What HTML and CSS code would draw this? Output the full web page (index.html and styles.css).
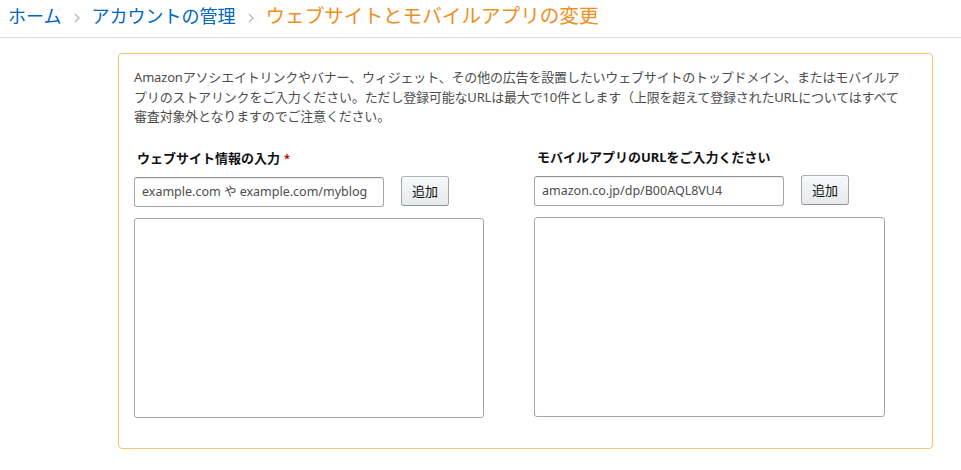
FILE: index.html
```html
<!DOCTYPE html>
<html lang="ja">
<head>
<meta charset="utf-8">
<title>ウェブサイトとモバイルアプリの変更</title>
<link rel="stylesheet" href="styles.css">
</head>
<body>
<nav class="crumbs">
  <a class="crumb" href="#">ホーム</a>
  <svg class="chev" width="6" height="10" viewBox="0 0 6 10"><path d="M1 1l4 4-4 4" fill="none" stroke="#b8b8b8" stroke-width="1.4"/></svg>
  <a class="crumb" href="#">アカウントの管理</a>
  <svg class="chev" width="6" height="10" viewBox="0 0 6 10"><path d="M1 1l4 4-4 4" fill="none" stroke="#b8b8b8" stroke-width="1.4"/></svg>
  <span class="crumb-current">ウェブサイトとモバイルアプリの変更</span>
</nav>
<main class="page">
  <section class="panel">
    <p class="intro">Amazonアソシエイトリンクやバナー、ウィジェット、その他の広告を設置したいウェブサイトのトップドメイン、またはモバイルア<br>プリのストアリンクをご入力ください。ただし登録可能なURLは最大で10件とします（上限を超えて登録されたURLについてはすべて<br>審査対象外となりますのでご注意ください。</p>
    <div class="cols">
      <div class="col">
        <label class="label">ウェブサイト情報の入力<span class="req">*</span></label>
        <div class="row">
          <input class="field" type="text" placeholder="example.com や example.com/myblog">
          <button class="btn" type="button">追加</button>
        </div>
        <textarea class="area"></textarea>
      </div>
      <div class="col">
        <label class="label">モバイルアプリのURLをご入力ください</label>
        <div class="row">
          <input class="field" type="text" placeholder="amazon.co.jp/dp/B00AQL8VU4">
          <button class="btn" type="button">追加</button>
        </div>
        <textarea class="area"></textarea>
      </div>
    </div>
  </section>
</main>
</body>
</html>
```
FILE: styles.css
```css
body {
  margin: 0;
  background: #fff;
  color: #111;
  font-family: "Noto Sans", "Noto Sans CJK JP", sans-serif;
}

.crumbs {
  display: flex;
  align-items: baseline;
  height: 37px;
  padding: 0 8px;
  border-bottom: 1px solid #dddddd;
  font-family: "Noto Sans CJK JP", sans-serif;
  line-height: 30px;
}

.crumb {
  color: #0066c0;
  font-size: 18px;
  text-decoration: none;
}

.chev {
  margin: 0 11px 0 13px;
  align-self: center;
  position: relative;
  top: -1px;
}

.crumb-current {
  color: #ef8f1e;
  font-size: 19.6px;
}

.page {
  padding: 15px 28px 20px 118px;
}

.panel {
  border: 1px solid #f7c572;
  border-radius: 4px;
  padding: 14px 15px 30px;
}

.intro {
  margin: 0;
  font-size: 13px;
  line-height: 19.5px;
  color: #4d4d4d;
  white-space: nowrap;
  letter-spacing: -0.18px;
}

.cols {
  display: grid;
  grid-template-columns: 350px 351px;
  column-gap: 50px;
}

.label {
  display: block;
  margin: 21px 0 8px 3px;
  font-size: 13px;
  line-height: 19px;
  font-weight: 700;
  color: #111;
}

.req {
  color: #c40000;
  margin-left: 4px;
  font-size: 11px;
  vertical-align: 1px;
}

.row {
  display: flex;
  align-items: flex-start;
}

.field {
  box-sizing: border-box;
  width: 250px;
  height: 30px;
  margin: 1px 0 0;
  padding: 0 7px;
  border: 1px solid #a6a6a6;
  border-top-color: #949494;
  border-radius: 3px;
  box-shadow: 0 1px 0 rgba(255, 255, 255, 0.5), 0 1px 0 rgba(0, 0, 0, 0.07) inset;
  font-family: "Noto Sans", "Noto Sans CJK JP", sans-serif;
  font-size: 12.5px;
  color: #111;
  outline: none;
}

.field::placeholder {
  color: #4d4d4d;
  opacity: 1;
}

.btn {
  box-sizing: border-box;
  width: 48px;
  height: 30px;
  margin-left: 17px;
  padding: 0;
  border: 1px solid;
  border-color: #adb1b8 #a2a6ac #8d9096;
  border-radius: 3px;
  background: linear-gradient(to bottom, #f7f8fa, #e7e9ec);
  box-shadow: 0 1px 0 rgba(255, 255, 255, 0.6) inset;
  font-family: "Noto Sans CJK JP", sans-serif;
  font-size: 13px;
  color: #111;
}

.area {
  display: block;
  box-sizing: border-box;
  width: 100%;
  height: 200px;
  margin-top: 11px;
  border: 1px solid #a6a6a6;
  border-radius: 3px;
  resize: none;
  outline: none;
}
```
